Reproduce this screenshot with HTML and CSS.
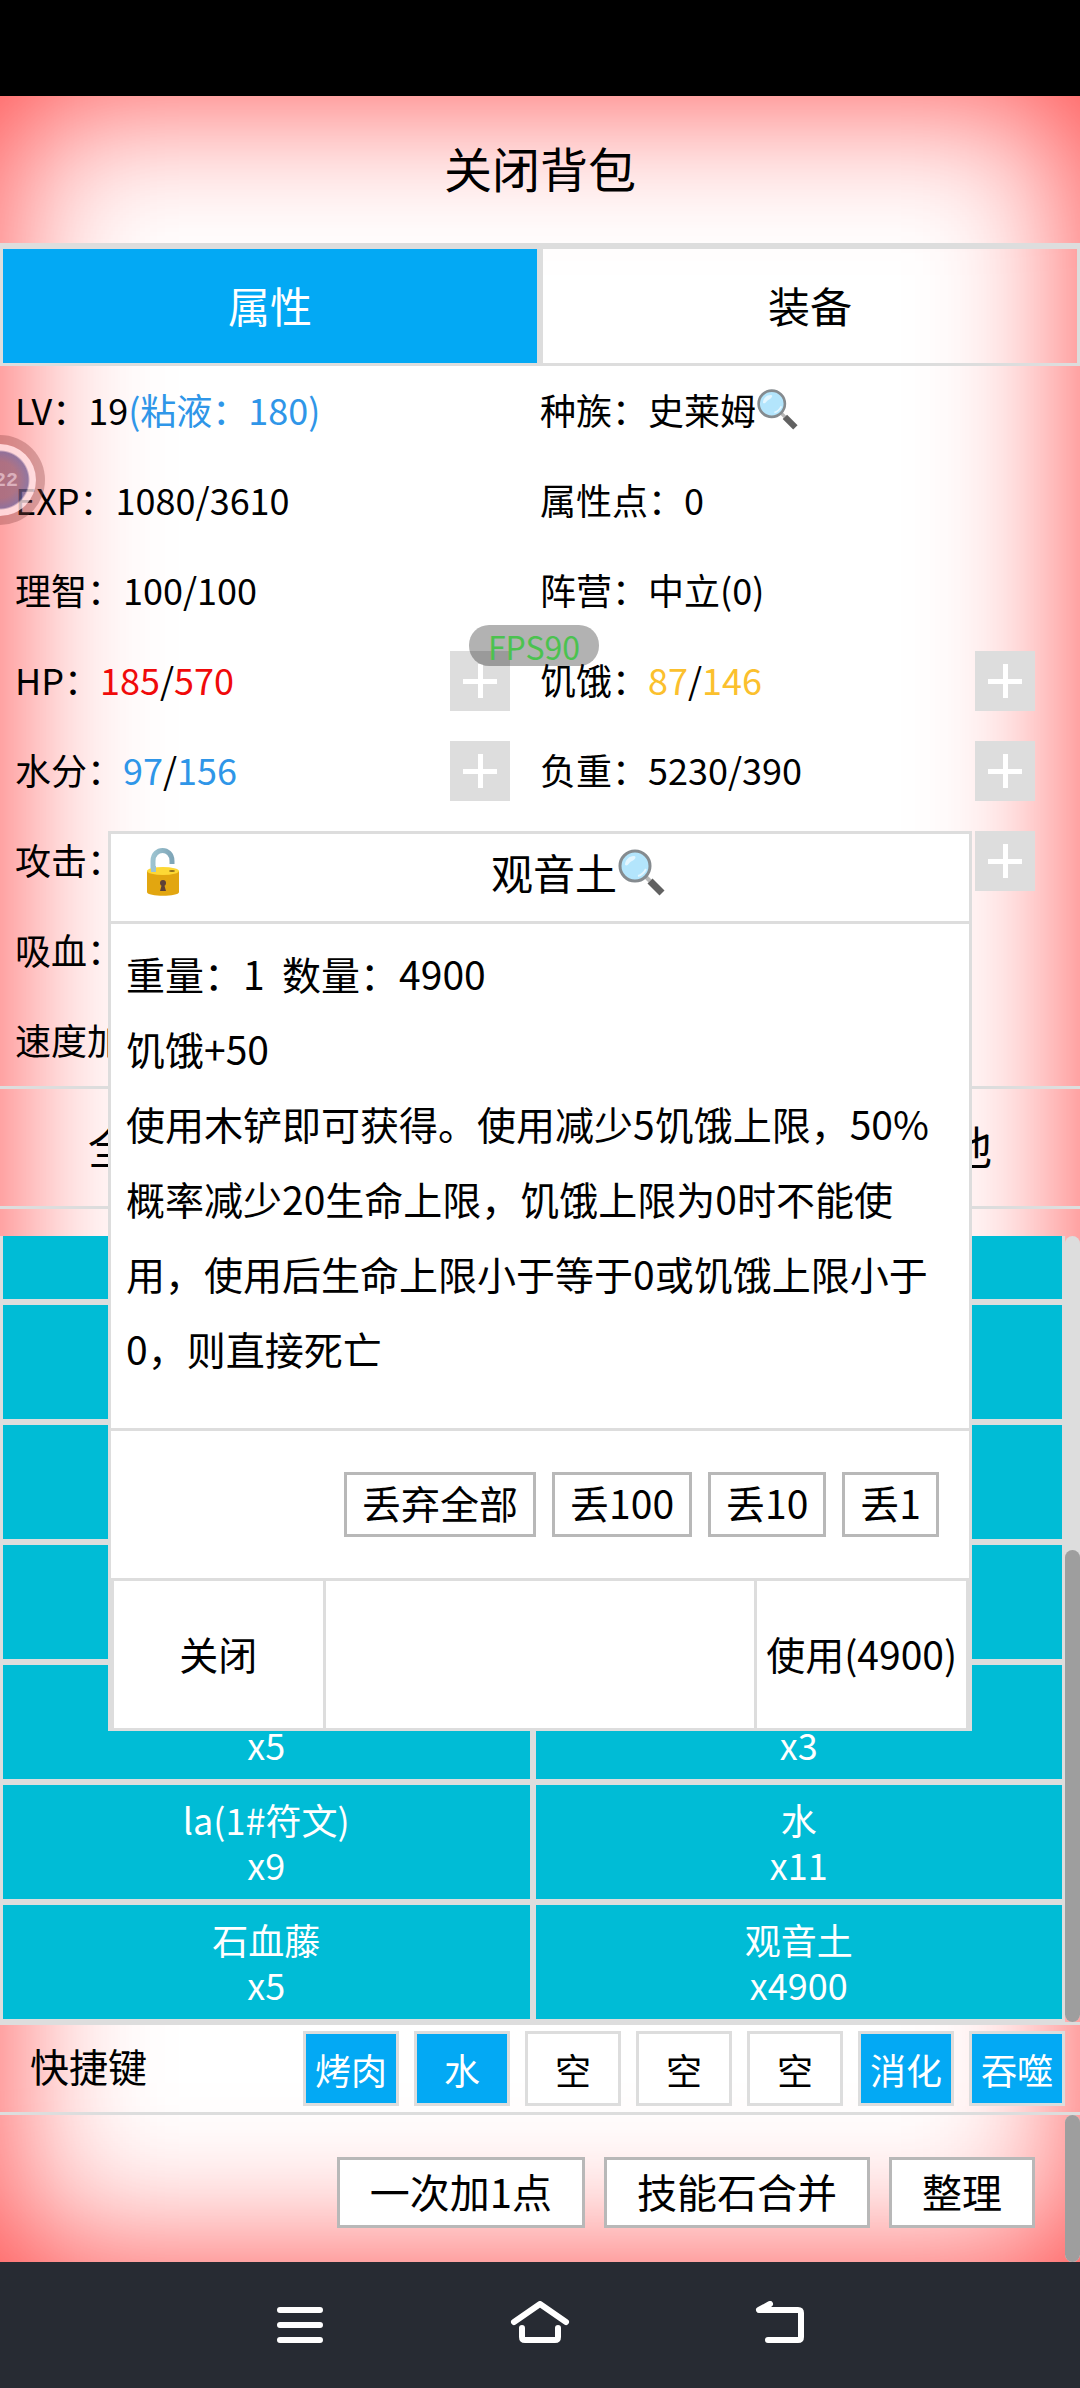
FILE: index.html
```html
<!DOCTYPE html>
<html lang="zh-CN">
<head>
<meta charset="UTF-8" />
<meta name="viewport" content="width=device-width, initial-scale=1.0"/>
<title>背包</title>
<link rel="stylesheet" href="styles.css">
</head>
<body>

<!-- 图标 -->
<svg class="sprite" aria-hidden="true">
  <linearGradient id="shackle" x1="0" y1="0" x2="1" y2="0">
    <stop offset="0" stop-color="#9cc3d0"/>
    <stop offset="1" stop-color="#7fa6b8"/>
  </linearGradient>
  <symbol id="icon-search" viewBox="0 0 48 48">
    <path d="M29 29l4 4" stroke="#b8b8b8" stroke-width="4"/>
    <path d="M33 33l12 12" stroke="#616161" stroke-width="7"/>
    <circle cx="18" cy="18" r="15" fill="#b3e5fc" stroke="#858b8f" stroke-width="3"/>
    <path d="M8 17c0-5 4-9 9-9 3 0 1 4-2 5s-4 6-7 4z" fill="#e3f6ff"/>
    <path d="M21 28c4-1 6-3 8-7" fill="none" stroke="#e3f6ff" stroke-width="2"/>
  </symbol>
  <symbol id="icon-unlock" viewBox="0 0 36 50">
    <path d="M8 25V14c0-14 19-14 19 0v3" fill="none" stroke="url(#shackle)" stroke-width="5"/>
    <path d="M2 24v21c0 5 32 5 32 0V24z" fill="#e2a610"/>
    <ellipse cx="18" cy="24" rx="16" ry="4" fill="#fdd835"/>
    <path d="M6 19h5v6H6z" fill="#9cc3d0"/>
    <ellipse cx="27" cy="24" rx="3" ry="1" fill="#8d6e1b"/>
    <circle cx="18" cy="36" r="3" fill="#5d4037"/>
    <path d="M17 37h2l2 7h-6z" fill="#5d4037"/>
  </symbol>
</svg>

<div class="status-bar"></div>

<main class="game">
  <button class="bag-close">关闭背包</button>

  <div class="tabs">
    <button class="tab active">属性</button>
    <button class="tab">装备</button>
  </div>

  <div class="stats">
    <div class="stat"><span>LV：19<span class="blue">(粘液：180)</span></span></div>
    <div class="stat"><span>种族：史莱姆</span><svg class="icon-search"><use href="#icon-search"/></svg></div>
    <div class="stat">EXP：1080/3610</div>
    <div class="stat">属性点：0</div>
    <div class="stat">理智：100/100</div>
    <div class="stat">阵营：中立(0)</div>
    <div class="stat"><span>HP：<span class="red">185</span>/<span class="red">570</span></span><button class="plus" aria-label="增加HP"></button></div>
    <div class="stat"><span>饥饿：<span class="yellow">87</span>/<span class="yellow">146</span></span><button class="plus" aria-label="增加饥饿"></button></div>
    <div class="stat"><span>水分：<span class="blue">97</span>/<span class="blue">156</span></span><button class="plus" aria-label="增加水分"></button></div>
    <div class="stat"><span>负重：5230/390</span><button class="plus" aria-label="增加负重"></button></div>
    <div class="stat"><span>攻击：</span><button class="plus" aria-label="增加攻击"></button></div>
    <div class="stat"><button class="plus" aria-label="增加"></button></div>
    <div class="stat">吸血：</div>
    <div class="stat"></div>
    <div class="stat">速度加</div>
    <div class="stat"></div>
  </div>

  <div class="filters">
    <button>全部</button>
    <button>其他</button>
  </div>

  <div class="bag">
    <div class="items">
      <button class="item"></button>
      <button class="item"></button>
      <button class="item"></button>
      <button class="item"></button>
      <button class="item"></button>
      <button class="item"></button>
      <button class="item"></button>
      <button class="item"></button>
      <button class="item">&nbsp;<br>x5</button>
      <button class="item">&nbsp;<br>x3</button>
      <button class="item">la(1#符文)<br>x9</button>
      <button class="item">水<br>x11</button>
      <button class="item">石血藤<br>x5</button>
      <button class="item">观音土<br>x4900</button>
    </div>
    <div class="scrollbar"><div class="thumb"></div></div>
  </div>

  <div class="shortcuts">
    <span class="shortcuts-title">快捷键</span>
    <button class="key used">烤肉</button>
    <button class="key used">水</button>
    <button class="key">空</button>
    <button class="key">空</button>
    <button class="key">空</button>
    <button class="key used">消化</button>
    <button class="key used">吞噬</button>
  </div>

  <div class="actions">
    <div class="actions-list">
      <button>一次加1点</button>
      <button>技能石合并</button>
      <button>整理</button>
    </div>
    <div class="scrollbar"><div class="thumb"></div></div>
  </div>

  <!-- 物品详情弹窗 -->
  <div class="modal" role="dialog" aria-labelledby="itemName">
    <div class="modal-header">
      <button class="lock" aria-label="锁定"><svg><use href="#icon-unlock"/></svg></button>
      <h2 id="itemName">观音土<svg class="icon-search"><use href="#icon-search"/></svg></h2>
    </div>
    <div class="modal-body">
      <p>重量：1&nbsp; 数量：4900</p>
      <p>饥饿+50</p>
      <p>使用木铲即可获得。使用减少5饥饿上限，50%概率减少20生命上限，饥饿上限为0时不能使用，使用后生命上限小于等于0或饥饿上限小于0，则直接死亡</p>
    </div>
    <div class="modal-drop">
      <button>丢弃全部</button>
      <button>丢100</button>
      <button>丢10</button>
      <button>丢1</button>
    </div>
    <div class="modal-footer">
      <button>关闭</button>
      <div></div>
      <button>使用(4900)</button>
    </div>
  </div>

  <!-- 悬浮层 -->
  <div class="float-ball"><span>22</span></div>
  <div class="fps">FPS90</div>
</main>

<nav class="nav-bar">
  <button aria-label="菜单">
    <svg viewBox="0 0 60 48"><path d="M10 9h40M10 24h40M10 39h40"/></svg>
  </button>
  <button aria-label="主页">
    <svg viewBox="0 0 60 48"><path d="M4 21L30 3l26 18M12 27v9q0 3 3 3h30q3 0 3-3v-9"/></svg>
  </button>
  <button aria-label="返回">
    <svg viewBox="0 0 60 48"><path d="M20 3L9 9h39q3 0 3 3v24q0 3-3 3H18"/></svg>
  </button>
</nav>

</body>
</html>
```
FILE: styles.css
```css
* {
  box-sizing: border-box;
}

body {
  margin: 0;
  min-height: 100vh;
  display: flex;
  flex-direction: column;
  font-family: "Noto Sans CJK SC", sans-serif;
  font-size: 36px;
  color: #000;
}

button {
  margin: 0;
  padding: 0 0 4px;
  border: none;
  background: none;
  font: inherit;
  color: inherit;
  cursor: pointer;
}

.sprite {
  position: absolute;
  width: 0;
  height: 0;
}

.blue { color: #2f96e8; }
.red { color: #f00a0a; }
.yellow { color: #fbc02d; }

/* 手机状态栏和导航栏 */
.status-bar {
  height: 96px;
  background: #000;
}

.nav-bar {
  height: 126px;
  padding: 0 180px;
  display: flex;
  align-items: center;
  background: #272b33;
}

.nav-bar button {
  flex: 1;
  display: flex;
  justify-content: center;
  padding: 0;
}

.nav-bar svg {
  width: 60px;
  height: 48px;
  fill: none;
  stroke: #fff;
  stroke-width: 6;
  stroke-linecap: round;
  stroke-linejoin: round;
}

.game {
  position: relative;
  flex: 1;
  display: flex;
  flex-direction: column;
  overflow: hidden;
  background: #fff;
  box-shadow: inset 0 0 150px rgba(255, 0, 0, 0.75);
}

.bag-close {
  height: 150px;
  padding-bottom: 6px;
  border-bottom: 3px solid #ddd;
  font-size: 48px;
}

.tabs {
  display: flex;
}

.tab {
  flex: 1;
  height: 120px;
  border: 3px solid #ddd;
  font-size: 42px;
}

.tab.active {
  background: #03a9f4;
  color: #fff;
}

/* 属性 */
.stats {
  display: grid;
  grid-template-columns: 1fr 1fr;
  padding: 0 15px;
}

.stat {
  height: 90px;
  padding-bottom: 5px;
  display: flex;
  align-items: center;
  white-space: nowrap;
}

.icon-search {
  width: 42px;
  height: 42px;
}

.plus {
  width: 60px;
  height: 60px;
  margin: 5px 30px 0 auto;
  background:
    linear-gradient(#fff, #fff) center / 34px 5px no-repeat,
    linear-gradient(#fff, #fff) center / 5px 34px no-repeat,
    #ddd;
}

.filters {
  display: flex;
  justify-content: space-between;
  height: 123px;
  margin-bottom: 27px;
  padding: 0 88px;
  border-top: 3px solid #ddd;
  border-bottom: 3px solid #ddd;
  font-size: 45px;
}

/* 背包 */
.bag {
  flex: 1 1 0;
  min-height: 0;
  display: flex;
  overflow: hidden;
}

.items {
  flex: 1;
  display: grid;
  grid-template-columns: 1fr 1fr;
  grid-auto-rows: 120px;
  align-content: end;
}

.item {
  padding: 0;
  border: 3px solid #ddd;
  background: #00bcd6;
  color: #fff;
  line-height: 45px;
}

.scrollbar {
  width: 15px;
  display: flex;
  flex-direction: column;
  justify-content: flex-end;
  border-radius: 8px;
  background: #ddd;
}

.thumb {
  height: 60%;
  border-radius: 8px;
  background: #9e9e9e;
}

.actions .thumb {
  height: 100%;
}

.shortcuts {
  display: flex;
  align-items: center;
  gap: 15px;
  height: 93px;
  padding: 0 15px 0 30px;
  border-top: 3px solid #ddd;
  border-bottom: 3px solid #ddd;
}

.shortcuts-title {
  margin-right: auto;
  padding-bottom: 8px;
  font-size: 39px;
}

.key {
  width: 96px;
  height: 75px;
  padding: 0;
  border: 3px solid #ddd;
  background: #fff;
  white-space: nowrap;
}

.key.used {
  background: #03a9f4;
  color: #fff;
}

.actions {
  display: flex;
  height: 147px;
}

.actions-list {
  flex: 1;
  display: flex;
  justify-content: flex-end;
  align-items: center;
  gap: 19px;
  padding: 8px 30px 0 0;
}

.actions-list button {
  height: 71px;
  padding: 0 30px 4px;
  border: 3px solid #b8b8b8;
  background: #fff;
  font-size: 40px;
  line-height: 60px;
}

/* 弹窗 */
.modal {
  position: absolute;
  top: 735px;
  left: 10%;
  width: 80%;
  height: 900px;
  display: flex;
  flex-direction: column;
  border: 3px solid #ddd;
  border-bottom: none;
  background: #fff;
  font-size: 39px;
}

.modal-header {
  height: 90px;
  display: flex;
  align-items: center;
  padding-bottom: 12px;
  border-bottom: 3px solid #ddd;
}

.modal-header h2 {
  flex: 1;
  margin: 0;
  display: flex;
  justify-content: center;
  align-items: center;
  font-size: 42px;
  font-weight: normal;
}

.modal-header .icon-search {
  width: 48px;
  height: 48px;
}

.lock {
  width: 48px;
  margin-left: 28px;
  display: flex;
  justify-content: center;
  padding: 0;
}

.lock svg {
  width: 36px;
  height: 50px;
}

.modal-body {
  flex: 1;
  padding: 12px 15px;
  line-height: 75px;
}

.modal-body p {
  margin: 0;
}

.modal-drop {
  height: 150px;
  display: flex;
  justify-content: flex-end;
  align-items: center;
  gap: 16px;
  padding-right: 30px;
  border-top: 3px solid #ddd;
}

.modal-drop button {
  height: 65px;
  padding: 0 15px 4px;
  border: 3px solid #b8b8b8;
  line-height: 55px;
}

.modal-footer {
  height: 153px;
  display: grid;
  grid-template-columns: 24.5% 1fr 24.5%;
  border: 3px solid #ddd;
}

.modal-footer > * {
  white-space: nowrap;
}

.modal-footer div {
  border-left: 3px solid #ddd;
  border-right: 3px solid #ddd;
}

/* 悬浮层 */
.float-ball {
  position: absolute;
  top: 339px;
  left: -45px;
  width: 90px;
  height: 90px;
  display: flex;
  justify-content: flex-end;
  align-items: center;
  padding-right: 18px;
  border-radius: 50%;
  border: 9px solid rgba(140, 70, 70, 0.35);
  background: radial-gradient(circle, rgba(140, 90, 115, 0.7) 18px, rgba(110, 95, 150, 0.75) 28px, rgba(255, 225, 228, 0.8) 30px);
  background-clip: padding-box;
  color: #dbb0bc;
  font: bold 20px "Liberation Mono", monospace;
}

.fps {
  position: absolute;
  top: 529px;
  left: 469px;
  width: 130px;
  height: 41px;
  border-radius: 20px;
  background: rgba(0, 0, 0, 0.3);
  color: #4bc24f;
  font-size: 32px;
  line-height: 42px;
  text-align: center;
}
```
